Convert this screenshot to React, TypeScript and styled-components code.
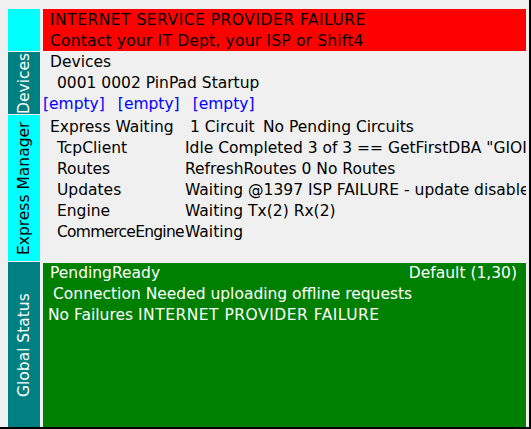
import styled, {createGlobalStyle} from 'styled-components';
import {FC, ReactNode} from 'react';

const GlobalStyle = createGlobalStyle`
  body {
    margin: 0;
    background: #f0f0f0;
    font-family: "DejaVu Sans", Verdana, sans-serif;
  }
`

type RowType = {
  label: string
  value: string
  tight?: boolean
}

const rows: RowType[] = [
  {label: 'TcpClient', value: 'Idle Completed 3 of 3 == GetFirstDBA "GIOI'},
  {label: 'Routes', value: 'RefreshRoutes 0 No Routes'},
  {label: 'Updates', value: 'Waiting @1397 ISP FAILURE - update disabled'},
  {label: 'Engine', value: 'Waiting Tx(2) Rx(2)'},
  {label: 'CommerceEngine', value: 'Waiting', tight: true},
]

type SectionProps = {
  tab: string
  tabBg: string
  tabColor: string
  height: number
  children: ReactNode
}

const Section: FC<SectionProps> = ({tab, tabBg, tabColor, height, children}) => {
  return (
    <Row height={height}>
      <Tab bg={tabBg} color={tabColor}>{tab}</Tab>
      <Content>{children}</Content>
    </Row>
  )
}

export default function App() {
  return (
    <>
      <GlobalStyle/>
      <Window>
        <Section tab="" tabBg="#00ffff" tabColor="#000" height={42}>
          <Alert>
            <div><Caps>INTERNET SERVICE PROVIDER FAILURE</Caps></div>
            <div>Contact your IT Dept, your ISP or Shift4</div>
          </Alert>
        </Section>

        <Section tab="Devices" tabBg="#008080" tabColor="#fff" height={62}>
          <Line indent={7}>Devices</Line>
          <Line indent={14}>0001 0002 PinPad Startup</Line>
          <EmptyList>
            <Empty>[empty]</Empty>
            <Empty>[empty]</Empty>
            <Empty>[empty]</Empty>
          </EmptyList>
        </Section>

        <Section tab="Express Manager" tabBg="#00ffff" tabColor="#000" height={146}>
          <Express>
            <Summary>
              <span>Express Waiting</span>
              <span>1 Circuit</span>
              <span>No Pending Circuits</span>
            </Summary>
            {rows.map(r => (
              <StatusRow key={r.label}>
                <Label tight={r.tight}>{r.label}</Label>
                <Value>{r.value}</Value>
              </StatusRow>
            ))}
          </Express>
        </Section>

        <Section tab="Global Status" tabBg="#008080" tabColor="#fff" height={166}>
          <Global>
            <GlobalHead>
              <span>PendingReady</span>
              <span>Default (1,30)</span>
            </GlobalHead>
            <Line indent={10}>Connection Needed uploading offline requests</Line>
            <Line indent={5}>No Failures <Caps>INTERNET PROVIDER FAILURE</Caps></Line>
          </Global>
        </Section>
      </Window>
    </>
  )
}

const Window = styled.div`
  box-sizing: border-box;
  width: 531px;
  height: 429px;
  padding: 9px 3px 0 8px;
  border-right: 2px solid #000;
  border-bottom: 2px solid #000;
  display: flex;
  flex-direction: column;
  gap: 1px;
  overflow: hidden;
  font-size: 15.5px;
  line-height: 21px;
  color: #000;
`

const Row = styled.div<{height: number}>`
  display: grid;
  grid-template-columns: 32px 1fr;
  column-gap: 3px;
  height: ${p => p.height}px;
  flex-shrink: 0;
`

const Tab = styled.div<{bg: string, color: string}>`
  background: ${p => p.bg};
  color: ${p => p.color};
  writing-mode: vertical-rl;
  transform: rotate(180deg);
  display: flex;
  align-items: center;
  justify-content: center;
  white-space: nowrap;
`

const Content = styled.div`
  min-width: 0;
  overflow: hidden;
  white-space: nowrap;
`

const Alert = styled.div`
  background: #ff0000;
  height: 100%;
  padding: 1px 7px 0;
  box-sizing: border-box;
  letter-spacing: 0.2px;
`

const Caps = styled.span`
  letter-spacing: 0.5px;
`

const Line = styled.div<{indent: number}>`
  padding-left: ${p => p.indent}px;
`

const EmptyList = styled.div`
  display: flex;
  gap: 13px;
`

const Empty = styled.span`
  color: #0000ff;
`

const Express = styled.div`
  padding-top: 2px;
`

const Summary = styled.div`
  display: grid;
  grid-template-columns: 140px 73px auto;
  padding-left: 7px;
`

const StatusRow = styled.div`
  display: flex;
  padding-left: 14px;
`

const Label = styled.span<{tight?: boolean}>`
  min-width: 128px;
  letter-spacing: ${p => p.tight ? '-0.75px' : 'normal'};
`

const Value = styled.span`
  overflow: hidden;
`

const Global = styled.div`
  background: #008000;
  color: #fff;
  height: 100%;
  box-sizing: border-box;
  margin-top: 1px;
`

const GlobalHead = styled.div`
  display: flex;
  justify-content: space-between;
  padding: 0 9px 0 7px;
`
